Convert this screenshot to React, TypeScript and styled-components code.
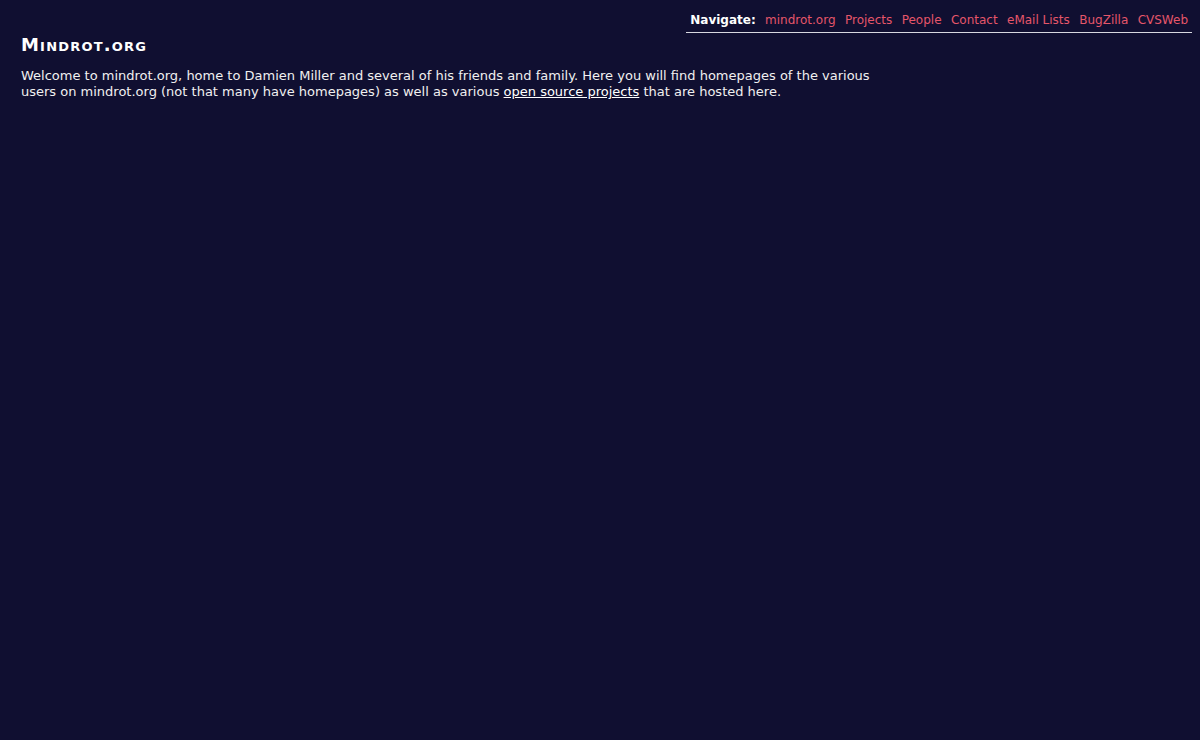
import React from "react";
import styled, { createGlobalStyle } from "styled-components";

const GlobalStyle = createGlobalStyle`
	html, body {
		margin: 0;
		background: #100f31;
	}
	body {
		padding: 8px;
		font-family: Verdana, "DejaVu Sans", sans-serif;
		font-size: 13px;
		color: #f0f0f0;
	}
`;

const Page = styled.div`
	display: flex;
	flex-direction: column;
`;

const NavBar = styled.div`
	align-self: flex-end;
	display: flex;
	gap: 9.4px;
	padding: 4px 4px 4px 4px;
	border-bottom: 1px solid #d8d8e0;
	font-size: 12px;
	line-height: 16px;
`;

const NavLabel = styled.span`
	font-weight: bold;
	color: #ffffff;
`;

const NavLink = styled.a`
	color: #e5566a;
	text-decoration: none;
`;

const Content = styled.div`
	padding: 0 13px;
	max-width: 880px;
`;

const Title = styled.h1`
	font-size: 18px;
	font-weight: bold;
	font-variant: small-caps;
	letter-spacing: 1.2px;
	color: #ffffff;
	margin: 3px 0 14px;
	line-height: 18px;
`;

const Intro = styled.p`
	margin: 0;
	line-height: 16px;
`;

const InlineLink = styled.a`
	color: #ffffff;
	text-decoration: underline;
`;

const links = ["mindrot.org", "Projects", "People", "Contact", "eMail Lists", "BugZilla", "CVSWeb"];

export default function App(): JSX.Element {
	return (
		<Page>
			<GlobalStyle />
			<NavBar>
				<NavLabel>Navigate:</NavLabel>
				{links.map((l) => (
					<NavLink key={l} href="#">
						{l}
					</NavLink>
				))}
			</NavBar>
			<Content>
				<Title>Mindrot.org</Title>
				<Intro>
					Welcome to mindrot.org, home to Damien Miller and several of his friends and family. Here you will find
					homepages of the various users on mindrot.org (not that many have homepages) as well as various{" "}
					<InlineLink href="#">open source projects</InlineLink> that are hosted here.
				</Intro>
			</Content>
		</Page>
	);
}
